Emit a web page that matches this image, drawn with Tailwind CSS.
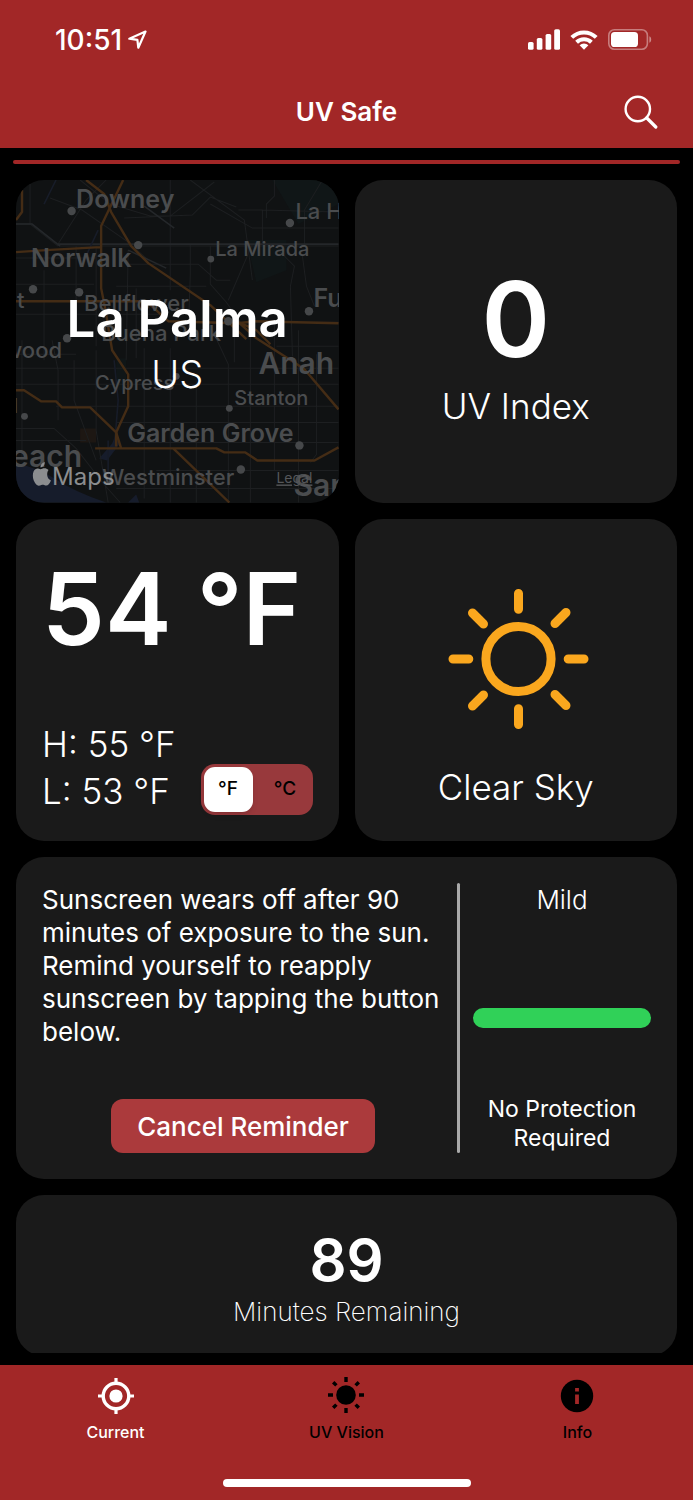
<!DOCTYPE html>
<html lang="en">
<head>
    <meta charset="UTF-8">
    <meta name="viewport" content="width=device-width, initial-scale=1.0">
    <title>UV Safe</title>
    <script src="https://cdn.jsdelivr.net/npm/@tailwindcss/browser@4"></script>
</head>
<body class="flex h-screen flex-col overflow-hidden bg-black font-['Inter',sans-serif] text-white">

    <header class="shrink-0 bg-[#a22727]">
        <!-- Status bar -->
        <div class="flex h-[79px] items-center justify-between pl-[55px] pr-[41px]">
            <div class="flex items-center gap-[6px]">
                <span class="text-[28px] leading-8 font-medium">10:51</span>
                <svg class="size-[19px]" viewBox="0 0 19 19" fill="none" stroke="#fff" stroke-width="2.2" stroke-linejoin="round" aria-hidden="true">
                    <path d="M17.5 1.5 1.3 8.7l8.1 1.2.9 7.8z"/>
                </svg>
            </div>
            <div class="flex items-center gap-[10px]">
                <svg class="h-[21px] w-8" viewBox="0 0 32 21" fill="#fff" aria-hidden="true">
                    <rect x="0" y="13" width="5.6" height="7.8" rx="1.6"/>
                    <rect x="8.8" y="9" width="5.6" height="11.8" rx="1.6"/>
                    <rect x="17.6" y="5" width="5.6" height="15.8" rx="1.6"/>
                    <rect x="26.2" y="0.2" width="5.8" height="20.6" rx="1.6"/>
                </svg>
                <svg class="h-5 w-7" viewBox="0 0 28 20" aria-hidden="true">
                    <g fill="none" stroke="#fff" stroke-width="4">
                        <path d="M1.8 7.4a17.4 17.4 0 0 1 24.4 0"/>
                        <path d="M6.6 12.2a10.6 10.6 0 0 1 14.8 0"/>
                    </g>
                    <path fill="#fff" d="M9.6 15.3a6.4 6.4 0 0 1 8.8 0L14 19.8z"/>
                </svg>
                <svg class="h-[21px] w-11" viewBox="0 0 44 21" aria-hidden="true">
                    <rect x="0.8" y="0.8" width="38.6" height="19.4" rx="5.6" fill="none" stroke="#fff" stroke-opacity=".4" stroke-width="1.6"/>
                    <rect x="3" y="3" width="27" height="15" rx="3.6" fill="#fff"/>
                    <path d="M41.4 7.2c2.4 1 2.4 5.6 0 6.6z" fill="#fff" fill-opacity=".45"/>
                </svg>
            </div>
        </div>
        <!-- Title bar -->
        <div class="grid h-[69px] grid-cols-[1fr_auto_1fr] items-center px-[35px] pb-[3px]">
            <h1 class="col-start-2 text-[26px] leading-8 font-semibold">UV Safe</h1>
            <button type="button" class="justify-self-end" aria-label="Search">
                <svg class="size-[34px]" viewBox="0 0 34 34" fill="none" stroke="#fff" aria-hidden="true">
                    <circle cx="13.8" cy="14" r="12.2" stroke-width="2.4"/>
                    <path d="m22.8 23 9 9" stroke-width="3.2" stroke-linecap="round"/>
                </svg>
            </button>
        </div>
    </header>

    <div class="mx-[13px] mt-3 h-1 shrink-0 rounded-full bg-[#a22727]"></div>

    <main class="mt-4 mb-3 min-h-0 flex-1 overflow-hidden px-4">
        <div class="grid grid-cols-2 gap-4">

            <!-- Location -->
            <section class="relative aspect-square overflow-hidden rounded-[28px] bg-[#101213]">
                <svg class="absolute inset-0 size-full" viewBox="0 0 322 322" aria-hidden="true">
                    <path fill="#161c2b" d="M0 283q22 4 40 16t50 23H0zM96 263l5-13 2 14-12 16-8-2zM112 322l8-8 3 8z"/>
                    <path fill="#1d1713" d="M64 248h16v14H64z"/>
                    <path fill="#101617" d="M256 0h66v24l-40 20zM100 178h10v32h-10zM230 60h40v30l-30 12z"/>
                    <g fill="none" stroke="#1d1f21" stroke-width="1">
                        <path d="M14 4v40L42 66M34 18l32 12 46 32 20 18M42 64 70 20l20-20M64 0l30 24 40 12h20l44-34M154 0v110M174 0l54 40 8 60M108 38l68-3 18-18 26 10M222 30h24v34M246 30l74 2M194 24l42 24h86M258 0v16l-8 8v14M306 0l-18 30v34"/>
                        <path d="M0 44h16l28 22h278M60 66v90M28 90v90M80 66v100M0 104h78M0 134h150M0 78h80M174 64v30l-2 60M110 84h72l18 16h14M194 66v38l16 18 14 20h98M236 64l-24 56M262 70l16 16-4 20 2 70M286 76l4 30 8 20M100 106h90M112 70l-2 110M120 108v70"/>
                        <path d="M6 160v120M36 160l6 30v50M58 180v40l22 60M80 170v80l12 72M128 168v150M154 168v154M180 200v122M196 150l16 34v138M234 150v172M258 140v150M282 150v172M300 174v100l-6 8M0 188h322M0 204h322M40 226h282M100 242h222M0 248h38l22 20 28 36 16 18M120 262h202M0 260h70M140 290h182M100 308h222M218 152v30M260 166h62M0 174h60"/>
                    </g>
                    <g fill="none" stroke="#24272a" stroke-width="1.6">
                        <path d="M0 44h16l28 22M42 64h280M112 70l38 18M128 26l30 22"/>
                    </g>
                    <g fill="none" stroke="#171c28" stroke-width="1.6">
                        <path d="M82 50 68 80M98 180l4 40-4 50M92 260v40M40 0 28 24"/>
                    </g>
                    <g fill="none" stroke="#442c15" stroke-width="2.4" stroke-linejoin="round">
                        <path d="M6 10v22l-6 8M70 0l18 14 7 18 20 34 17 17 62 42 36 34"/>
                        <path d="M107 0 85 46v62l4 20 7 42 16 24v32l-12 26v14M0 72l30-2 54-3M0 121h130l22 20 70 2 16-2 84 2"/>
                        <path d="M0 210h8l17 11h15l6 6h28l26 25 5 16M79 268h121l8 4h21l12 8h57l24-13M157 268l56 54M222 142l18 16 36 23 12 8 34 40M222 142l18 8 14 14"/>
                    </g>
                    <g fill="#46484a">
                        <circle cx="55.500" cy="31" r="4.200"/>
                        <circle cx="122" cy="65" r="4.200"/>
                        <circle cx="273.500" cy="43" r="4.200"/>
                        <circle cx="194.500" cy="79" r="3.400"/>
                        <circle cx="17" cy="109" r="4.200"/>
                        <circle cx="63" cy="112" r="4.200"/>
                        <circle cx="292.500" cy="131" r="4.200"/>
                        <circle cx="212" cy="141" r="4.200"/>
                        <circle cx="51" cy="158" r="4.200"/>
                        <circle cx="160" cy="196" r="3.400"/>
                        <circle cx="213" cy="228" r="3.400"/>
                        <circle cx="8.500" cy="236" r="3.400"/>
                        <circle cx="283" cy="265" r="4.200"/>
                        <circle cx="224.500" cy="289" r="4.200"/>
                    </g>
                    <g class="font-['Inter',sans-serif] font-semibold" fill="#4a4c4e">
                        <g class="text-[25px]">
                            <text x="60" y="28">Downey</text>
                            <text x="15" y="87">Norwalk</text>
                            <text x="297" y="127">Fu</text>
                            <text x="111" y="262">Garden Grove</text>
                        </g>
                        <g class="text-[30px]">
                            <text x="242" y="194">Anah</text>
                            <text x="-5" y="287">each</text>
                            <text x="277" y="316">Sar</text>
                        </g>
                        <g class="text-[22px] font-medium">
                            <text x="279" y="39">La Habra</text>
                            <text x="68" y="131">Bellflower</text>
                            <text x="85" y="161">Buena Park</text>
                            <text x="86" y="305">Westminster</text>
                            <text x="-12" y="178">wood</text>
                            <text x="1" y="128">t</text>
                        </g>
                        <g class="text-[20px] font-medium">
                            <text x="199" y="76">La Mirada</text>
                            <text x="79" y="210">Cypress</text>
                            <text x="218" y="225">Stanton</text>
                            <text x="-3" y="233">l</text>
                        </g>
                    </g>
                    <text x="260" y="303" class="font-['Inter',sans-serif] text-[14px] underline" fill="#55575a">Legal</text>
                    <g fill="#8b8d8f">
                        <path transform="translate(2 0)" d="M30.500 289.500c-2-1.600-4-2.200-6.400-1.200-1.400.6-1.800.6-3.200 0-6-2-8 8-4 14 2.600 4 4.400 3 6.400 2.200 1-.4 1.800-.4 2.800 0 3 1.600 4.800.2 6.800-4.500-4.400-2-4.600-8-2.400-10.500zM22.500 287c0-2.800 1.600-4.600 4.200-5.400.2 2.800-1.600 5.200-4.200 5.400z"/>
                        <text x="36" y="305" class="font-['Inter',sans-serif] text-[24px]">Maps</text>
                    </g>
                </svg>
                <div class="relative flex flex-col items-center gap-0.5 pt-[109px]">
                    <h2 class="text-[51px] leading-[60px] font-semibold">La Palma</h2>
                    <p class="text-[38px] leading-[46px] font-light">US</p>
                </div>
            </section>

            <!-- UV index -->
            <section class="flex aspect-square flex-col items-center gap-3 rounded-[28px] bg-[#1a1a1a] pt-[87px]">
                <p class="text-[104px] leading-[104px] font-semibold">0</p>
                <h2 class="text-[35px] leading-[46px] font-light">UV Index</h2>
            </section>

            <!-- Temperature -->
            <section class="flex aspect-square flex-col justify-between rounded-[28px] bg-[#1a1a1a] p-[26px] pt-[25px]">
                <p class="text-[100px] leading-[130px] font-semibold whitespace-nowrap">54 °F</p>
                <div class="flex items-end justify-between">
                    <div class="text-[35px] leading-[47px] font-light whitespace-nowrap">
                        <p>H: 55 °F</p>
                        <p>L: 53 °F</p>
                    </div>
                    <fieldset class="grid h-[51px] w-28 shrink-0 grid-cols-2 gap-2 rounded-[14px] bg-[#98393c] p-[3px] text-[19px] font-medium text-black" aria-label="Temperature unit">
                        <label class="flex items-center justify-center rounded-[11px] has-checked:bg-white has-checked:shadow-md">
                            <input type="radio" name="unit" class="sr-only" checked>°F
                        </label>
                        <label class="flex items-center justify-center rounded-[11px] has-checked:bg-white has-checked:shadow-md">
                            <input type="radio" name="unit" class="sr-only">°C
                        </label>
                    </fieldset>
                </div>
            </section>

            <!-- Conditions -->
            <section class="flex aspect-square flex-col items-center gap-[35px] rounded-[28px] bg-[#1a1a1a] pt-[70px]">
                <svg class="h-[140px] w-[146px]" viewBox="-73 -70 146 140" fill="none" stroke="#faa71e" stroke-width="9" stroke-linecap="round" aria-hidden="true">
                    <g transform="translate(2.500 0)">
                        <circle r="32.600"/>
                        <path d="M0-65.500v15.800M0 49.700v15.800M-65.500 0h15.800M49.700 0h15.800M-46-46l11 11M47.500-46.500l-11 11M-46 47l11-11M47.500 46.500l-11-11"/>
                    </g>
                </svg>
                <h2 class="text-[35px] leading-[46px] font-light">Clear Sky</h2>
            </section>

            <!-- Sunscreen reminder -->
            <section class="col-span-2 flex min-h-[322px] gap-[13px] rounded-[28px] bg-[#1a1a1a] p-[26px]">
                <div class="flex flex-1 flex-col items-center justify-between">
                    <p class="text-[26px] leading-[33px]">Sunscreen wears off after 90 minutes of exposure to the sun. Remind yourself to reapply sunscreen by tapping the button below.</p>
                    <button type="button" class="h-[54px] rounded-xl bg-[#ab3a3c] px-[26px] text-[26px] font-medium whitespace-nowrap">Cancel Reminder</button>
                </div>
                <div class="w-[3px] rounded-full bg-[#a9a9a9]"></div>
                <div class="grid w-[178px] shrink-0 grid-rows-[1fr_auto_1fr] text-center">
                    <h2 class="text-[26px] leading-[33px] font-light">Mild</h2>
                    <div class="h-5 rounded-full bg-[#30d158]"></div>
                    <p class="self-end text-[23px] leading-[29px]">No Protection Required</p>
                </div>
            </section>

            <!-- Timer -->
            <section class="col-span-2 flex min-h-[161px] flex-col items-center gap-0.5 rounded-[28px] bg-[#1a1a1a] pt-[33px]">
                <p class="text-[58px] leading-[64px] font-semibold">89</p>
                <h2 class="text-[26px] leading-[36px] font-extralight">Minutes Remaining</h2>
            </section>
        </div>
    </main>

    <nav class="flex h-[135px] shrink-0 flex-col items-center justify-between bg-[#a22727] pt-3 pb-[13px]">
        <div class="grid w-full grid-cols-3 text-[16px] leading-5 font-medium text-black">
            <a href="#current" class="flex flex-col items-center gap-[7px] text-white" aria-current="page">
                <svg class="size-[38px]" viewBox="-19 -19 38 38" fill="none" stroke="currentColor" aria-hidden="true">
                    <circle r="12.800" stroke-width="3.400"/>
                    <circle r="6.600" fill="currentColor" stroke="none"/>
                    <path d="M0-18v5M0 13v5M-18 0h5M13 0h5" stroke-width="3.200"/>
                </svg>
                Current
            </a>
            <a href="#vision" class="flex flex-col items-center gap-[7px]">
                <svg class="size-[38px]" viewBox="-18 -18 38 38" stroke="currentColor" stroke-width="3.400" aria-hidden="true">
                    <circle r="9.800" fill="currentColor" stroke="none"/>
                    <path d="M0-18v5M0 13v5M-18 0h5M13 0h5M-12.800-12.800l3.200 3.200M12.800-12.800l-3.200 3.200M-12.800 12.800l3.200-3.200M12.800 12.800l-3.200-3.200"/>
                </svg>
                UV Vision
            </a>
            <a href="#info" class="flex flex-col items-center gap-[7px]">
                <svg class="size-[38px]" viewBox="-18 -19 38 38" aria-hidden="true">
                    <circle r="16.200" fill="currentColor"/>
                    <path d="M-1.900-8h3.800v3.400h-3.800zM-1.900-1.400h3.800v9.400h-3.800z" fill="#a22727"/>
                </svg>
                Info
            </a>
        </div>
        <div class="h-2 w-[248px] rounded-full bg-white"></div>
    </nav>

</body>
</html>
